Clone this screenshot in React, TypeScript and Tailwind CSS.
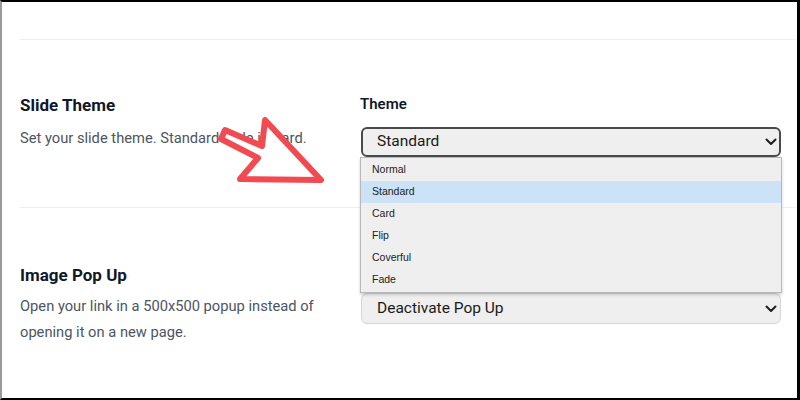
import React from "react";

function Chevron() {
  return (
    <svg width="12" height="8" viewBox="0 0 12 8" className="shrink-0">
      <path d="M1.5 1.5 L6 6 L10.5 1.5" fill="none" stroke="#1f1f1f" strokeWidth="2" strokeLinecap="round" strokeLinejoin="round" />
    </svg>
  );
}

export default function App() {
  const items = ["Normal", "Standard", "Card", "Flip", "Coverful", "Fade"];
  return (
    <div
      className="relative w-[800px] h-[400px] overflow-hidden bg-white border-t-2 border-b-2 border-l-2 border-r-[3px] border-t-black border-b-black border-r-black border-l-[#9a9a9a]"
      style={{ fontFamily: "Roboto, 'Noto Sans', sans-serif" }}
    >
      <div className="pl-[18px]">
        <div className="h-[38px] border-b border-[#efefef]" />
        {/* Section 1 */}
        <div className="flex h-[168px] border-b border-[#efefef]">
          <div className="w-[340px] pt-[53px]">
            <div className="text-[17px] leading-[24px] font-bold text-[#111827]">Slide Theme</div>
            <div className="mt-[8px] text-[14.7px] leading-[26px] text-[#4b5563]">
              Set your slide theme. Standard style is Card.
            </div>
          </div>
          <div className="w-[422px] pt-[53px]">
            <div className="text-[15px] leading-[22px] font-semibold text-[#111827]">Theme</div>
            <div className="mt-[12px] ml-[1px] flex h-[30px] w-[420px] items-center justify-between rounded-[6px] border-2 border-[#4a4a4a] bg-[#efefef] pl-[14px] pr-[2px]">
              <span className="text-[15.5px] text-[#1a1a1a]">Standard</span>
              <Chevron />
            </div>
          </div>
        </div>
        {/* Section 2 */}
        <div className="flex">
          <div className="w-[340px] pt-[55px]">
            <div className="text-[17px] leading-[24px] font-bold text-[#111827]">Image Pop Up</div>
            <div className="mt-[6px] text-[14.7px] leading-[26px] text-[#4b5563]">
              Open your link in a 500x500 popup instead of opening it on a new page.
            </div>
          </div>
          <div className="w-[422px] pt-[85px]">
            <div className="ml-[1px] flex h-[31px] w-[420px] items-center justify-between rounded-[6px] border border-[#d6d6d6] bg-[#efefef] pl-[15px] pr-[3px]">
              <span className="text-[15.5px] text-[#1a1a1a]">Deactivate Pop Up</span>
              <Chevron />
            </div>
          </div>
        </div>
      </div>

      {/* Open dropdown list */}
      <div
        className="absolute left-[358px] top-[155px] w-[422px] border border-[#b8b8b8] bg-[#efefef] py-[1px] shadow-[0_2px_3px_rgba(0,0,0,0.18)]"
        style={{ fontFamily: "'Liberation Sans', Arial, sans-serif" }}
      >
        {items.map((it) => (
          <div
            key={it}
            className={
              it === "Standard"
                ? "flex h-[22px] items-center bg-[#cce3f7] pl-[11px] text-[10.5px] text-[#222]"
                : "flex h-[22px] items-center pl-[11px] text-[10.5px] text-[#222]"
            }
          >
            {it}
          </div>
        ))}
      </div>

      {/* Red annotation arrow */}
      <svg className="absolute left-[-2px] top-[-2px]" width="800" height="400" viewBox="0 0 800 400">
        <polygon
          points="265,120 321,180 240,179 258,158 221,139 225,130 262,146"
          fill="white"
          stroke="#f14a50"
          strokeWidth="6"
          strokeLinejoin="round"
        />
      </svg>
    </div>
  );
}
